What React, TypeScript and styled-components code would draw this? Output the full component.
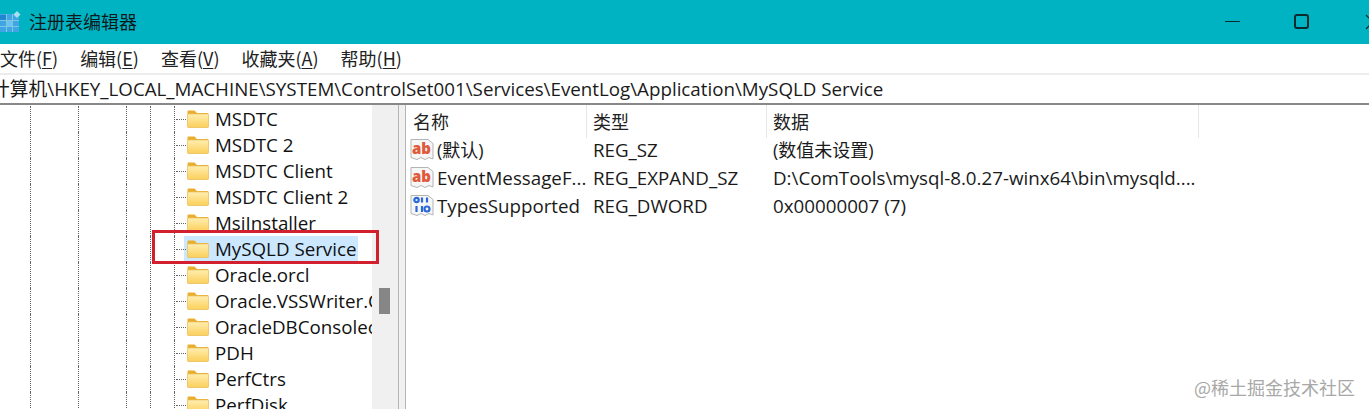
import React from "react";
import styled, { createGlobalStyle } from "styled-components";

const Global = createGlobalStyle`
  html, body { margin: 0; padding: 0; background: #fff; overflow: hidden; }
  body { font-family: "Open Sans", "Noto Sans CJK SC", sans-serif; color: #111; }
`;
const Win = styled.div`position: relative; width: 1369px; height: 409px; overflow: hidden; display: flex; flex-direction: column; background: #fff;`;
const TitleBar = styled.div`height: 44px; flex: none; background: #00b3c3; display: flex; align-items: center; position: relative;`;
const TitleText = styled.div`margin-left: 8px; font-size: 18px; line-height: 42px; height: 44px; color: #0c1a1c; font-family: "Noto Sans CJK SC", sans-serif;`;
const WinButtons = styled.div`margin-left: auto; display: flex; align-items: center;`;
const WinBtn = styled.svg`display: block; flex: none; margin-left: ${p => p.$gap}px; margin-right: ${p => p.$right ?? 0}px;`;
const MenuBar = styled.div`height: 29px; flex: none; display: flex; gap: 22px; align-items: center; font-size: 18px; color: #222; font-family: "Noto Sans CJK SC", sans-serif; padding-bottom: 1px; box-sizing: border-box;`;
const MenuItem = styled.span`white-space: nowrap; u { text-underline-offset: 2px; }`;
const Address = styled.div`height: 28px; flex: none; border-top: 2px solid #ececec; line-height: 28px; font-size: 18.75px; white-space: nowrap; overflow: hidden; color: #1a1a1a; text-indent: -9px; border-bottom: 2px solid #888;`;
const Panes = styled.div`flex: 1; min-height: 0; display: flex;`;
const Tree = styled.div`width: 372px; flex: none; overflow: hidden; padding-top: 1px;`;
const TreeRow = styled.div`height: 26px; display: flex; align-items: stretch; padding-left: 30px;`;
const Guide = styled.span`flex: none; width: ${p => p.$w}px; border-left: 1px dotted #666; box-sizing: border-box;`;
const Connector = styled.span`flex: none; width: 13px; border-left: 1px dotted #666; box-sizing: border-box; height: 26px; position: relative;
  &::after { content: ""; position: absolute; left: 1px; right: 1px; top: 13px; border-top: 1px dotted #666; }`;
const Node = styled.span`display: flex; align-items: center; height: 25px; flex: none; margin-left: -3px; padding: 0 2px 0 3px; gap: 6px; background: ${p => (p.$sel ? "#cce8ff" : "transparent")};`;
const NodeLabel = styled.span`font-size: 18.75px; color: #111; white-space: nowrap; line-height: 27px;`;
const Scrollbar = styled.div`width: 26px; flex: none; background: #f0f0f0; padding: 183px 0 0 7px; box-sizing: border-box;`;
const Thumb = styled.div`width: 11px; height: 26px; background: #868686;`;
const Splitter = styled.div`width: 8px; flex: none; box-sizing: border-box; background: #f1f1f1; border-left: 1px solid #b5b5b5; border-right: 1px solid #b5b5b5;`;
const ListPane = styled.div`flex: 1; min-width: 0; display: flex; flex-direction: column;`;
const Head = styled.div`height: 31px; flex: none; display: grid; grid-template-columns: 181px 180px 432px; font-size: 18px; font-family: "Noto Sans CJK SC", sans-serif; color: #222;`;
const HeadCell = styled.div`border-right: 1px solid #e6e6e6; padding-left: ${p => p.$pad}px; line-height: 33px;`;
const ListRow = styled.div`height: 28px; display: grid; grid-template-columns: 180px 180px 433px; font-size: 18.75px; line-height: 28px; color: #1a1a1a; white-space: nowrap;`;
const NameCell = styled.div`display: flex; align-items: center; gap: 3px; padding-left: 4px;`;
const NameText = styled.span`font-size: ${p => (p.$cjk ? 18 : 18.75)}px;`;
const Cell = styled.div`padding-left: 7px; overflow: hidden; font-size: ${p => (p.$cjk ? 18 : 18.75)}px;`;
const RedBox = styled.div`position: absolute; left: 152px; top: 230px; width: 227px; height: 34px; box-sizing: border-box; border: 3px solid #d2202f;`;
const Watermark = styled.div`position: absolute; right: 14px; top: 374px; font-size: 18px; color: #a8a8a8; font-family: "Noto Sans CJK SC", sans-serif;`;

const AppIcon = () => (
  <svg width="21" height="22" viewBox="0 0 21 22" style={{ flex: "none" }}>
    <rect x="0" y="3" width="19" height="18" fill="#3fa6e3" />
    {[6, 12].map(v => <rect key={"v" + v} x={v} y="3" width="1" height="18" fill="#7cc7e6" />)}
    {[9, 15].map(v => <rect key={"h" + v} x="0" y={v} width="19" height="1" fill="#7cc7e6" />)}
    <rect x="0" y="4" width="6" height="5" fill="#1f86cf" />
    <rect x="7" y="10" width="5" height="5" fill="#6cc3ee" />
    <path d="M17 0l3.500 3.500-3.500 3.500-3.500-3.500z" fill="#a8dfee" />
  </svg>
);
const Folder = () => (
  <svg width="22" height="18" viewBox="0 0 22 18" style={{ flex: "none" }}>
    <defs>
      <linearGradient id="fg" x1="0" y1="0" x2="0" y2="1">
        <stop offset="0" stopColor="#ffeeb0" />
        <stop offset="1" stopColor="#fbcf5a" />
      </linearGradient>
    </defs>
    <path d="M0.500 1.500a1 1 0 0 1 1-1h6l2.500 2.500h10.500a1 1 0 0 1 1 1v12.500a1 1 0 0 1-1 1h-19a1 1 0 0 1-1-1z" fill="#e9ae2c" />
    <rect x="0.500" y="4" width="21" height="13.500" rx="1" fill="url(#fg)" stroke="#e8c36a" strokeWidth="0.700" />
  </svg>
);
const RegPage = ({ children }: { children: React.ReactNode }) => (
  <svg width="24" height="24" viewBox="0 0 24 24" style={{ flex: "none" }}>
    <path d="M1 1.500h17l5 4v15.500l-4-1.500-4 2-4-2-4 2-6-2z" fill="#f6f6f6" stroke="#b4b4b4" />
    {children}
  </svg>
);
const AbIcon = () => (
  <RegPage>
    <text x="11.500" y="16" textAnchor="middle" fontFamily="Open Sans, sans-serif" fontWeight="800" fontSize="15" fill="#e0593a">ab</text>
  </RegPage>
);
const BinIcon = () => (
  <RegPage>
    <g fill="none" stroke="#2a68d8" strokeWidth="2.200">
      <circle cx="6.500" cy="6" r="2.200" />
      <path d="M12 3.500v5M17 3.500v5M6.500 12v6M12 12v6" />
      <circle cx="17" cy="15" r="2.500" />
    </g>
  </RegPage>
);

const nodes = ["MSDTC", "MSDTC 2", "MSDTC Client", "MSDTC Client 2", "MsiInstaller", "MySQLD Service", "Oracle.orcl", "Oracle.VSSWriter.ORCL", "OracleDBConsoleorcl", "PDH", "PerfCtrs", "PerfDisk"];
const rows = [
  { icon: <AbIcon />, name: "(默认)", type: "REG_SZ", data: "(数值未设置)", cjkName: true, cjkData: true },
  { icon: <AbIcon />, name: "EventMessageF...", type: "REG_EXPAND_SZ", data: "D:\\ComTools\\mysql-8.0.27-winx64\\bin\\mysqld....", cjkName: false, cjkData: false },
  { icon: <BinIcon />, name: "TypesSupported", type: "REG_DWORD", data: "0x00000007 (7)", cjkName: false, cjkData: false },
];

export default function App() {
  return (
    <Win>
      <Global />
      <TitleBar>
        <AppIcon />
        <TitleText>注册表编辑器</TitleText>
        <WinButtons>
          <WinBtn $gap={0} width="16" height="16" viewBox="0 0 16 16"><path d="M0 7.500h15" stroke="#0b2a2e" strokeWidth="1" /></WinBtn>
          <WinBtn $gap={53} width="16" height="16" viewBox="0 0 16 16"><rect x="1" y="1" width="13" height="13" rx="2" fill="none" stroke="#0b2a2e" strokeWidth="2" /></WinBtn>
          <WinBtn $gap={55} $right={-12} width="16" height="16" viewBox="0 0 16 16"><path d="M1 1l14 14M15 1L1 15" stroke="#0b2a2e" strokeWidth="1.200" /></WinBtn>
        </WinButtons>
      </TitleBar>
      <MenuBar>
        <MenuItem>文件(<u>F</u>)</MenuItem>
        <MenuItem>编辑(<u>E</u>)</MenuItem>
        <MenuItem>查看(<u>V</u>)</MenuItem>
        <MenuItem>收藏夹(<u>A</u>)</MenuItem>
        <MenuItem>帮助(<u>H</u>)</MenuItem>
      </MenuBar>
      <Address>计算机\HKEY_LOCAL_MACHINE\SYSTEM\ControlSet001\Services\EventLog\Application\MySQLD Service</Address>
      <Panes>
        <Tree>
          {nodes.map((n, i) => (
            <TreeRow key={n}>
              <Guide $w={48} /><Guide $w={48} /><Guide $w={24} /><Guide $w={24} />
              <Connector />
              <Node $sel={i === 5}><Folder /><NodeLabel>{n}</NodeLabel></Node>
            </TreeRow>
          ))}
        </Tree>
        <Scrollbar><Thumb /></Scrollbar>
        <Splitter />
        <ListPane>
          <Head><HeadCell $pad={7}>名称</HeadCell><HeadCell $pad={6}>类型</HeadCell><HeadCell $pad={6}>数据</HeadCell></Head>
          {rows.map(r => (
            <ListRow key={r.name}>
              <NameCell>{r.icon}<NameText $cjk={r.cjkName}>{r.name}</NameText></NameCell>
              <Cell>{r.type}</Cell>
              <Cell $cjk={r.cjkData}>{r.data}</Cell>
            </ListRow>
          ))}
        </ListPane>
      </Panes>
      <RedBox />
      <Watermark>@稀土掘金技术社区</Watermark>
    </Win>
  );
}
